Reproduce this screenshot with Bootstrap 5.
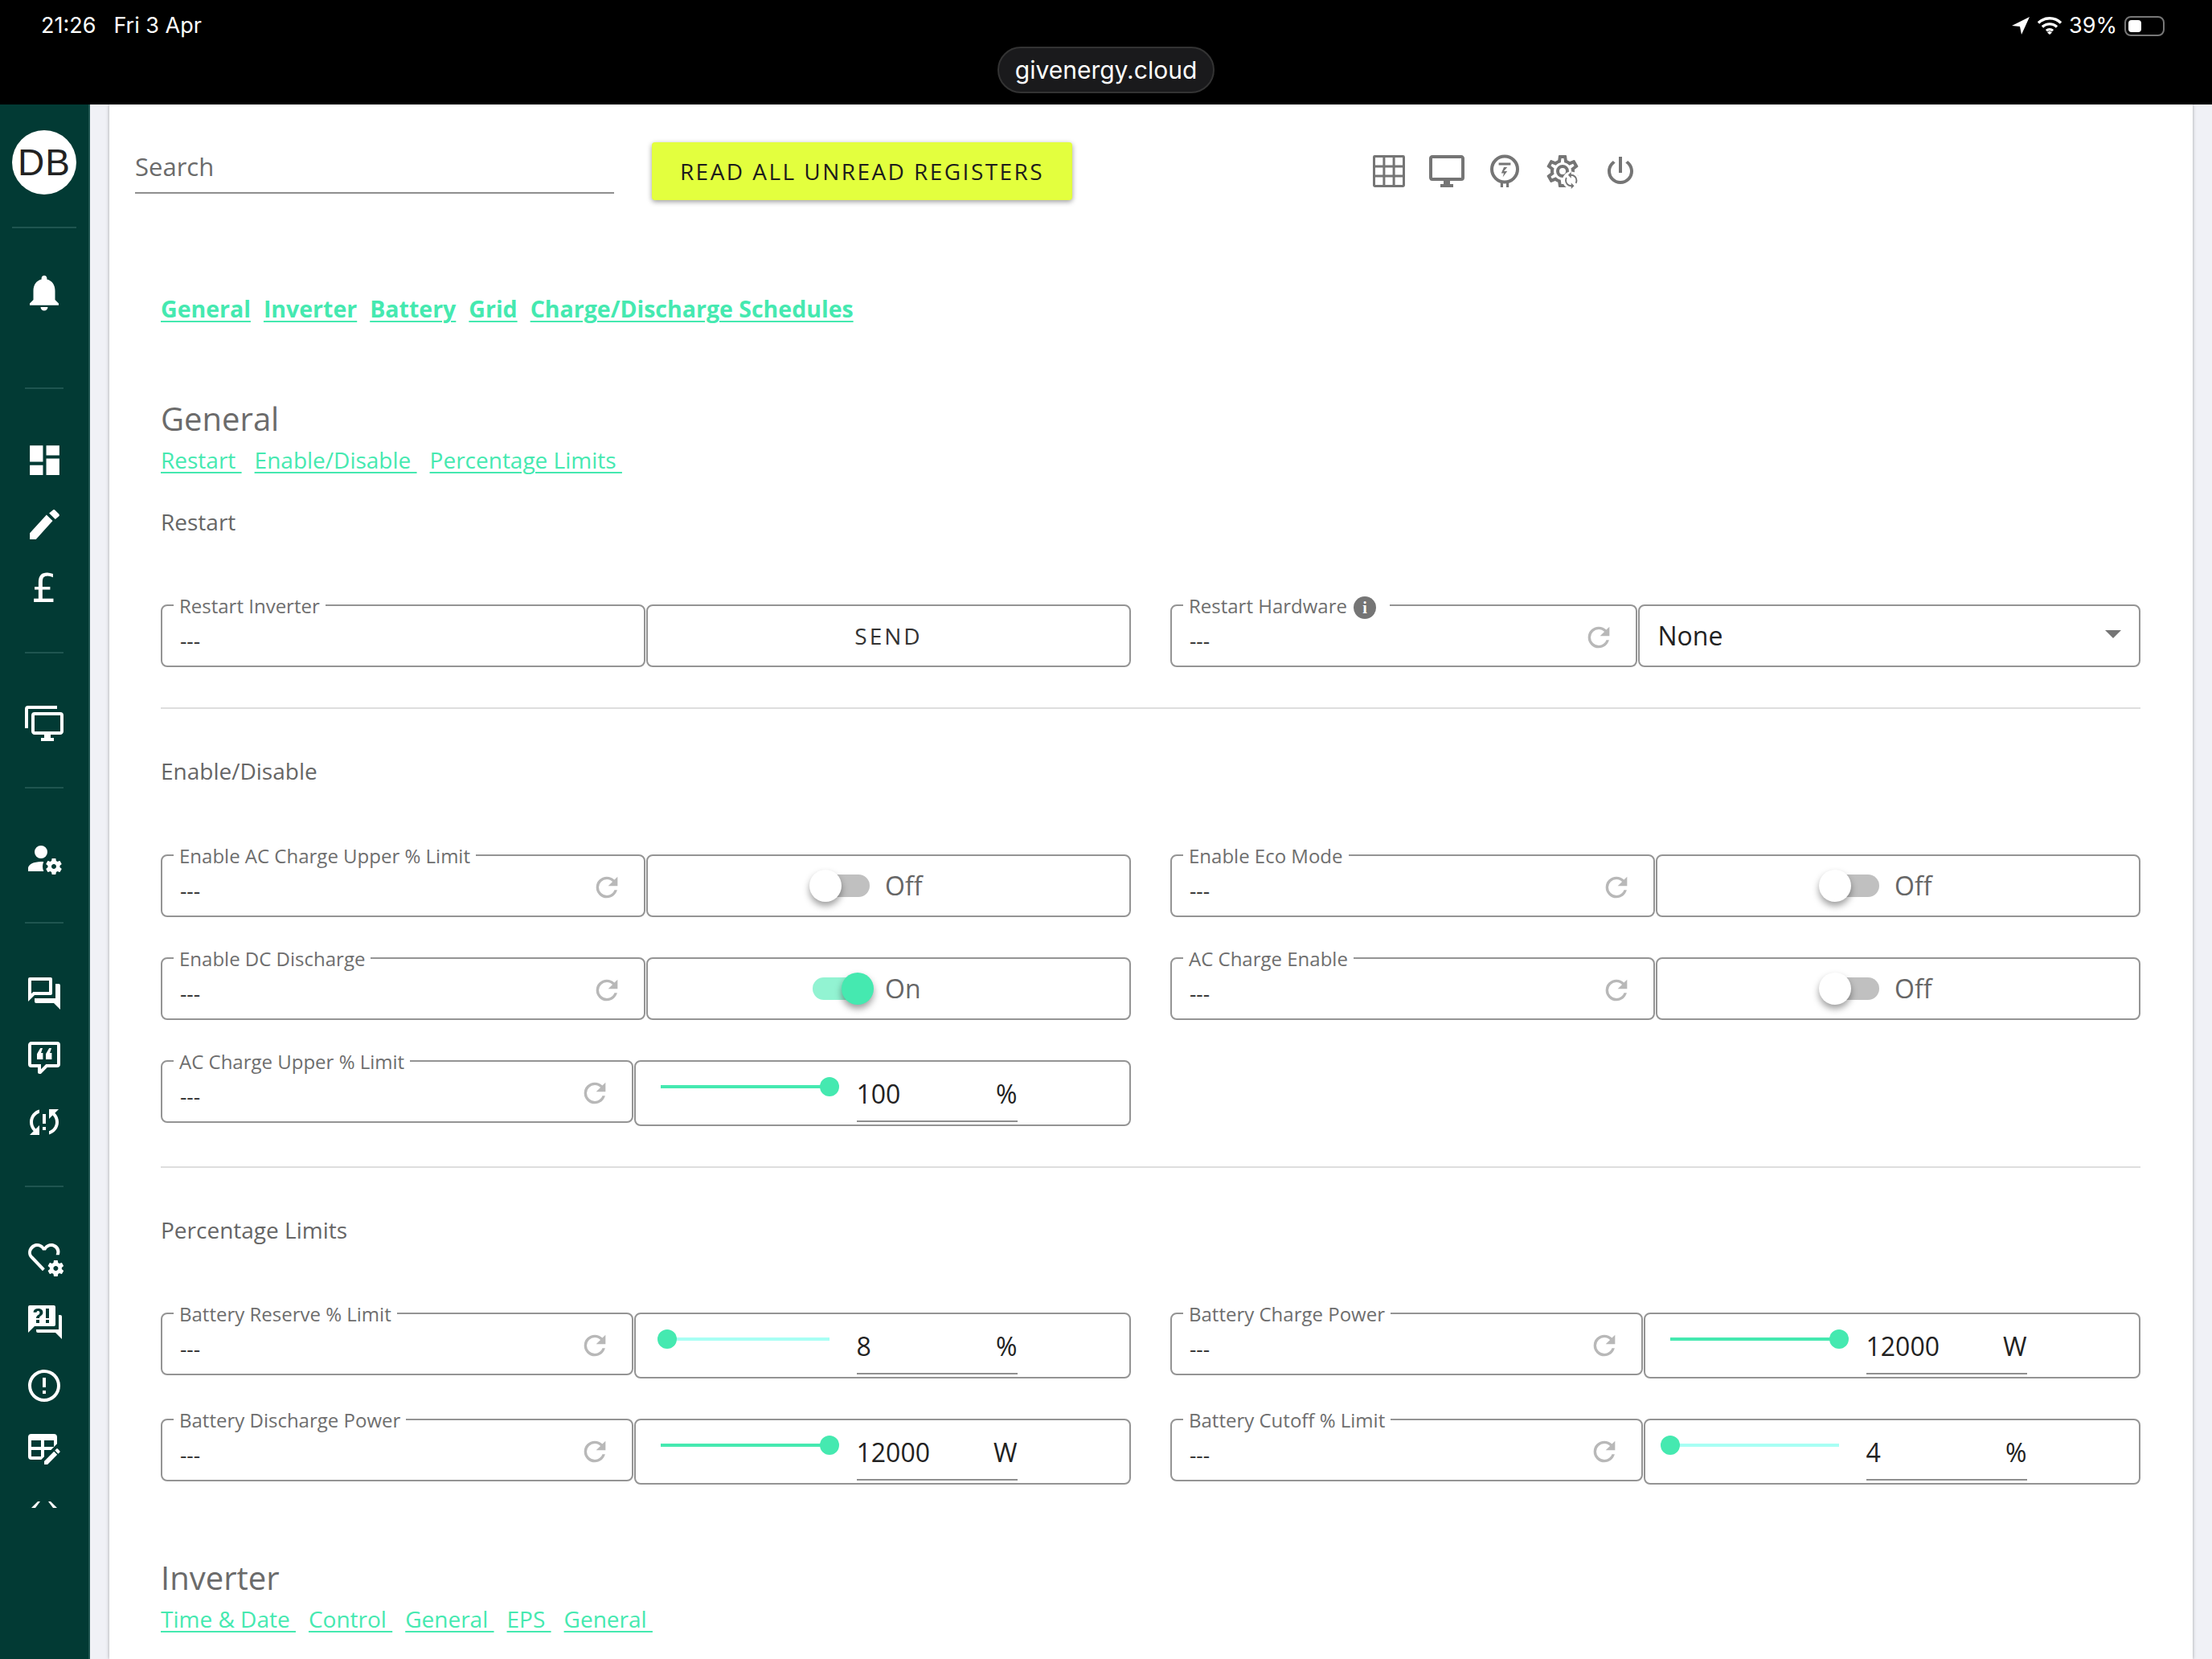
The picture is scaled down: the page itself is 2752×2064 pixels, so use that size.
<!DOCTYPE html>
<html lang="en">
<head>
    <meta charset="UTF-8">
    <meta name="viewport" content="width=device-width, initial-scale=1.0">
    <title>GivEnergy - Remote Control</title>
    <link href="https://cdn.jsdelivr.net/npm/bootstrap@5.3.0/dist/css/bootstrap.min.css" rel="stylesheet">
    <style>
        html, body { height: 100%; }
        body { overflow: hidden; background: #000; font-family: "Open Sans", sans-serif; color: #666; }

        /* ios status bar */
        .status-bar { height: 130px; background: #000; color: #fff; position: relative; font-family: Inter, sans-serif; font-size: 27px; }
        .status-left { padding: 14px 0 0 51px; line-height: 36px; gap: 22px; }
        .status-right { position: absolute; top: 14px; left: 2502px; line-height: 36px; }
        .url-pill { position: absolute; left: 1241px; top: 58px; width: 270px; height: 58px; line-height: 54px; text-align: center; font-size: 30px; border: 2px solid #333; border-radius: 29px; background: #1a1a1c; }
        .batt { width: 50px; height: 25px; border: 2px solid #777; border-radius: 8px; padding: 3px; margin-left: 9px; }
        .batt i { display: block; width: 16px; height: 100%; background: #fff; border-radius: 4px; }

        .app-shell { height: 1934px; overflow: hidden; }

        /* left nav */
        .side-nav { width: 112px; flex: none; background: #023a34; border-right: 2px solid #1f5550; height: 100%; padding-top: 32px; }
        .avatar { width: 80px; height: 80px; border-radius: 50%; background: #fff; color: #222; font: 46px/80px "Liberation Sans", sans-serif; text-align: center; letter-spacing: 1px; }
        .side-rule { width: 48px; height: 2px; background: #1f5550; margin: 39px 0 47px; flex: none; }
        .side-rule.wide { width: 80px; margin: 40px 0; }
        .side-rule.low { margin-top: 78px; margin-bottom: 48px; }
        .side-slot { height: 80px; width: 100%; flex: none; color: #fff; }
        .side-slot svg { fill: #fff; }
        .pound { font: 50px/1 "DejaVu Sans", sans-serif; }

        .gutter-pane { background: #f0f1f6; padding: 0 24px; flex: 1; min-width: 0; height: 100%; }
        .page-pane { background: #fff; height: 100%; padding: 47px 65px 0 64px; box-shadow: 0 0 4px rgba(0, 0, 0, .35); }

        /* toolbar */
        .tool-row { height: 72px; margin-left: -32px; }
        .search-box { width: 596px; height: 64px; border-bottom: 2px solid #8f8f8f; font-size: 31px; line-height: 60px; color: #6b6b6b; flex: none; }
        .btn-read { margin-left: 47px; width: 523px; height: 72px; padding: 0; background: #e3ff3e; border: 0; border-radius: 4px; color: #1c1c1c; font-size: 28px; letter-spacing: 2.45px; box-shadow: 0 2px 6px rgba(0, 0, 0, .4); flex: none; }
        .btn-read:hover { background: #e3ff3e; color: #1c1c1c; }
        .tool-icons { margin-left: 370px; gap: 24px; color: #757575; }
        .tool-icons svg { fill: currentColor; display: block; }

        /* headings and links */
        .jump-main { margin-top: 115px; line-height: 40px; font-size: 28.5px; font-weight: 700; gap: 16px; }
        a.jump { color: #45e9b0; text-decoration-thickness: 2px; text-underline-offset: 4px; }
        .sect-title { font-size: 40px; line-height: 56px; color: #6b6b6b; margin: 89px 0 0; font-weight: 400; }
        .sect-title.next { margin-top: 88px; }
        .jump-sub { margin-top: 3px; line-height: 40px; font-size: 28px; gap: 16px; }
        .jump-sub a { white-space: pre; }
        .group-title { font-size: 28px; line-height: 40px; color: #666; margin: 37px 0 83px; font-weight: 400; }
        .group-title.after-rule { margin-top: 57px; margin-bottom: 84px; }
        .group-title.last { margin-bottom: 83px; }
        hr.sect-rule { margin: 49px 0 0; border: 0; height: 2px; background: #dedede; opacity: 1; }
        hr.sect-rule.tight { margin-top: 50px; }

        /* register rows */
        .reg-row { --bs-gutter-x: 49px; --bs-gutter-y: 0; margin-bottom: 50px; }
        .reg-row:last-of-type { margin-bottom: 0; }
        .reg-cell { flex: 1 1 0; min-width: 0; height: 78px; border: 2px solid #949494; border-radius: 8px; position: relative; background: #fff; }
        .reg-cell.tall { height: 82px; }
        .reg-cell + .reg-cell { margin-left: 1px; }
        .reg-label { position: absolute; left: 14px; top: -15px; padding: 0 7px; background: #fff; font-size: 24px; line-height: 30px; color: #6e6e6e; white-space: nowrap; }
        .info-dot { display: inline-block; width: 28px; height: 28px; border-radius: 50%; background: #757575; color: #fff; font: 700 20px/28px "Liberation Serif", serif; text-align: center; margin: 0 10px 0 4px; vertical-align: 0; }
        .reg-value { position: absolute; left: 22px; top: 25px; line-height: 36px; font-size: 26px; color: #333; }
        .reg-reload { position: absolute; right: 26px; top: 19px; fill: #b8b8b8; display: block; }
        .send-cell { font-size: 28px; letter-spacing: 3px; color: #333; }
        .pick-cell { padding: 0 22px 0 23px; font-size: 32px; color: #222; }
        .pick-caret { width: 0; height: 0; border-left: 10px solid transparent; border-right: 10px solid transparent; border-top: 10px solid #757575; margin: 0 0 4px; }

        /* toggles */
        .switch-wrap { padding-left: 203px; height: 100%; }
        .sw-track { width: 71px; height: 28px; border-radius: 14px; background: #c0c0c0; position: relative; flex: none; margin-left: 2px; }
        .sw-thumb { position: absolute; top: -6px; left: -4px; width: 40px; height: 40px; border-radius: 50%; background: #fff; box-shadow: 0 5px 9px rgba(0, 0, 0, .38); }
        .sw-on .sw-track { background: #92f3d2; }
        .sw-on .sw-thumb { left: 36px; background: #45e9b0; }
        .sw-text { margin-left: 19px; font-size: 32px; color: #666; line-height: 40px; }

        /* sliders */
        .slide-wrap { padding-left: 31px; }
        .slide-rail { position: relative; width: 210px; height: 4px; margin-top: 29px; background: #a8fff4; flex: none; }
        .slide-fill { position: absolute; left: 0; top: 0; height: 100%; background: #45e9b0; }
        .slide-knob { position: absolute; top: -10px; width: 24px; height: 24px; margin-left: -12px; border-radius: 50%; background: #45e9b0; }
        .slide-input { margin: 18px 0 0 34px; width: 200px; height: 57px; line-height: 44px; border-bottom: 2px solid #8f8f8f; font-size: 32px; color: #222; flex: none; }
    </style>
</head>
<body>
    <svg width="0" height="0" class="d-block position-absolute">
        <symbol id="ic-reload" viewBox="0 0 24 24"><path d="M17.65,6.35C16.2,4.9 14.21,4 12,4A8,8 0 0,0 4,12A8,8 0 0,0 12,20C15.73,20 18.84,17.45 19.73,14H17.65C16.83,16.33 14.61,18 12,18A6,6 0 0,1 6,12A6,6 0 0,1 12,6C13.66,6 15.14,6.69 16.22,7.78L13,11H20V4L17.65,6.35Z"/></symbol>
    </svg>

    <div class="status-bar">
        <div class="status-left d-flex"><span>21:26</span><span>Fri 3 Apr</span></div>
        <div class="status-right d-flex align-items-center">
            <svg width="24" height="24" viewBox="0 0 24 24" fill="#fff"><path d="M23 1 L1 12 L11 13 L13 23 Z"/></svg>
            <svg class="ms-2" width="32" height="24" viewBox="0 0 32 24" fill="none" stroke="#fff" stroke-width="3.4"><path d="M2 8.5a20 20 0 0 1 28 0"/><path d="M7 13.5a13 13 0 0 1 18 0"/><path d="M12 18.3a6 6 0 0 1 8 0"/><path d="M13 20.5 L16 23 L19 20.5 L16 18.5Z" fill="#fff" stroke="none"/></svg>
            <span class="ms-2">39%</span>
            <div class="batt"><i></i></div>
        </div>
        <div class="url-pill">givenergy.cloud</div>
    </div>

    <div class="app-shell d-flex">
        <nav class="side-nav d-flex flex-column align-items-center">
            <div class="avatar flex-none">DB</div>
            <div class="side-rule wide"></div>
            <div class="side-slot d-flex align-items-center justify-content-center">
                <svg width="54" height="54" viewBox="0 0 24 24"><path d="M12 22c1.1 0 2-.9 2-2h-4c0 1.1.89 2 2 2zm6-6v-5c0-3.07-1.64-5.64-4.5-6.32V4c0-.83-.67-1.5-1.5-1.5s-1.5.67-1.5 1.5v.68C7.63 5.36 6 7.92 6 11v5l-2 2v1h16v-1l-2-2z"/></svg>
            </div>
            <div class="side-rule low"></div>
            <div class="side-slot d-flex align-items-center justify-content-center">
                <svg width="49" height="49" viewBox="0 0 24 24"><path d="M3 13h8V3H3v10zm0 8h8v-6H3v6zm10 0h8V11h-8v10zm0-18v6h8V3h-8z"/></svg>
            </div>
            <div class="side-slot d-flex align-items-center justify-content-center">
                <svg width="49" height="49" viewBox="0 0 24 24"><path d="M3 17.25V21h3.75L16.9 9.85l-3.75-3.75L3 17.25zM20.71 7.04c.39-.39.39-1.02 0-1.41l-2.34-2.34c-.39-.39-1.02-.39-1.41 0l-2.2 1.83 3.75 3.75 2.2-1.83z"/></svg>
            </div>
            <div class="side-slot pound d-flex align-items-center justify-content-center">£</div>
            <div class="side-rule"></div>
            <div class="side-slot d-flex align-items-center justify-content-center">
                <svg width="48" height="48" viewBox="0 0 24 24"><path d="M22,17V7H6V17H22M22,5A2,2 0 0,1 24,7V17C24,18.11 23.1,19 22,19H16V21H18V23H10V21H12V19H6C4.89,19 4,18.1 4,17V7A2,2 0 0,1 6,5H22M2,3V15H0V3A2,2 0 0,1 2,1H20V3H2Z"/></svg>
            </div>
            <div class="side-rule"></div>
            <div class="side-slot d-flex align-items-center justify-content-center">
                <svg width="48" height="48" viewBox="0 0 24 24" fill-rule="evenodd"><path d="M10 4A4 4 0 0 0 6 8A4 4 0 0 0 10 12A4 4 0 0 0 14 8A4 4 0 0 0 10 4M17 12C16.87 12 16.76 12.09 16.74 12.21L16.55 13.53C16.25 13.66 15.96 13.82 15.7 14L14.46 13.5C14.35 13.5 14.22 13.5 14.15 13.63L13.15 15.36C13.09 15.47 13.11 15.6 13.21 15.68L14.27 16.5C14.25 16.67 14.24 16.83 14.24 17C14.24 17.17 14.25 17.33 14.27 17.5L13.21 18.32C13.12 18.4 13.09 18.53 13.15 18.64L14.15 20.37C14.21 20.5 14.34 20.5 14.46 20.5L15.7 20C15.96 20.18 16.24 20.35 16.55 20.47L16.74 21.79C16.76 21.91 16.86 22 17 22H19C19.11 22 19.22 21.91 19.24 21.79L19.43 20.47C19.73 20.34 20 20.18 20.27 20L21.5 20.5C21.63 20.5 21.76 20.5 21.83 20.37L22.83 18.64C22.89 18.53 22.86 18.4 22.77 18.32L21.7 17.5C21.72 17.33 21.74 17.17 21.74 17C21.74 16.83 21.73 16.67 21.7 16.5L22.76 15.68C22.85 15.6 22.88 15.47 22.82 15.36L21.82 13.63C21.76 13.5 21.63 13.5 21.5 13.5L20.27 14C20 13.82 19.73 13.65 19.42 13.53L19.23 12.21C19.22 12.09 19.11 12 19 12H17M10 14C5.58 14 2 15.79 2 18V20H11.68A7 7 0 0 1 11 17A7 7 0 0 1 11.64 14.09C11.11 14.03 10.56 14 10 14M18 15.5C18.83 15.5 19.5 16.17 19.5 17C19.5 17.83 18.83 18.5 18 18.5C17.16 18.5 16.5 17.83 16.5 17C16.5 16.17 17.17 15.5 18 15.5Z"/></svg>
            </div>
            <div class="side-rule"></div>
            <div class="side-slot d-flex align-items-center justify-content-center">
                <svg width="48" height="48" viewBox="0 0 24 24"><path d="M15,4V11H5.17L4,12.17V4H15M16,2H3A1,1 0 0,0 2,3V17L6,13H16A1,1 0 0,0 17,12V3A1,1 0 0,0 16,2M21,6H19V15H6V17A1,1 0 0,0 7,18H18L22,22V7A1,1 0 0,0 21,6Z"/></svg>
            </div>
            <div class="side-slot d-flex align-items-center justify-content-center">
                <svg width="48" height="48" viewBox="0 0 24 24"><path d="M9,22A1,1 0 0,1 8,21V18H4A2,2 0 0,1 2,16V4C2,2.89 2.9,2 4,2H20A2,2 0 0,1 22,4V16A2,2 0 0,1 20,18H13.9L10.2,21.71C10,21.9 9.75,22 9.5,22H9M10,16V19.08L13.08,16H20V4H4V16H10Z"/><path d="M7.5 13V9.6L9.6 6H11L10 9H11.2V13ZM13 13V9.6L15.1 6H16.5L15.5 9H16.7V13Z"/></svg>
            </div>
            <div class="side-slot d-flex align-items-center justify-content-center">
                <svg width="48" height="48" viewBox="0 0 24 24"><path d="M11 13H13V7H11M21 4H15V10L17.24 7.76C18.32 8.85 19 10.34 19 12C19 14.61 17.33 16.83 15 17.65V19.74C18.45 18.85 21 15.73 21 12C21 9.79 20.09 7.8 18.64 6.36M11 17H13V15H11M3 12C3 14.21 3.91 16.2 5.36 17.64L3 20H9V14L6.76 16.24C5.68 15.15 5 13.66 5 12C5 9.39 6.67 7.17 9 6.35V4.26C5.55 5.15 3 8.27 3 12Z"/></svg>
            </div>
            <div class="side-rule"></div>
            <div class="side-slot d-flex align-items-center justify-content-center">
                <svg width="48" height="48" viewBox="0 0 24 24" fill-rule="evenodd"><path d="M11 20.6L3.6 12.9C1.2 10.4 1.7 6.6 4.4 4.5C7 2.7 10.3 3.4 12 5.7C13.7 3.4 17 2.7 19.6 4.5C21.6 6 22.2 8.4 21.4 10.6H19.3C20.1 8.9 19.6 7.1 18.3 6.2C16.4 4.9 14 5.6 13 7.8H11C10 5.6 7.6 4.9 5.7 6.2C3.6 7.7 3.3 10 5.1 11.5L12.4 19.1Z"/><path transform="translate(1.2 2)" d="M17 12C16.87 12 16.76 12.09 16.74 12.21L16.55 13.53C16.25 13.66 15.96 13.82 15.7 14L14.46 13.5C14.35 13.5 14.22 13.5 14.15 13.63L13.15 15.36C13.09 15.47 13.11 15.6 13.21 15.68L14.27 16.5C14.25 16.67 14.24 16.83 14.24 17C14.24 17.17 14.25 17.33 14.27 17.5L13.21 18.32C13.12 18.4 13.09 18.53 13.15 18.64L14.15 20.37C14.21 20.5 14.34 20.5 14.46 20.5L15.7 20C15.96 20.18 16.24 20.35 16.55 20.47L16.74 21.79C16.76 21.91 16.86 22 17 22H19C19.11 22 19.22 21.91 19.24 21.79L19.43 20.47C19.73 20.34 20 20.18 20.27 20L21.5 20.5C21.63 20.5 21.76 20.5 21.83 20.37L22.83 18.64C22.89 18.53 22.86 18.4 22.77 18.32L21.7 17.5C21.72 17.33 21.74 17.17 21.74 17C21.74 16.83 21.73 16.67 21.7 16.5L22.76 15.68C22.85 15.6 22.88 15.47 22.82 15.36L21.82 13.63C21.76 13.5 21.63 13.5 21.5 13.5L20.27 14C20 13.82 19.73 13.65 19.42 13.53L19.23 12.21C19.22 12.09 19.11 12 19 12H17M18 15.5C18.83 15.5 19.5 16.17 19.5 17C19.5 17.83 18.83 18.5 18 18.5C17.16 18.5 16.5 17.83 16.5 17C16.5 16.17 17.17 15.5 18 15.5Z"/></svg>
            </div>
            <div class="side-slot d-flex align-items-center justify-content-center">
                <svg width="48" height="48" viewBox="0 0 24 24" fill-rule="evenodd"><path d="M18,15H6L2,19V3A1,1 0 0,1 3,2H18A1,1 0 0,1 19,3V14A1,1 0 0,1 18,15M23,9V23L19,19H8A1,1 0 0,1 7,18V17H21V8H22A1,1 0 0,1 23,9M8.19,4C7.32,4 6.62,4.2 6.08,4.59C5.56,5 5.3,5.57 5.31,6.36L5.32,6.39H7.25C7.26,6.09 7.35,5.86 7.53,5.7C7.71,5.55 7.93,5.47 8.19,5.47C8.5,5.47 8.76,5.57 8.94,5.75C9.12,5.94 9.2,6.2 9.2,6.5C9.2,6.82 9.13,7.09 8.97,7.32C8.83,7.55 8.62,7.75 8.36,7.91C7.85,8.25 7.5,8.55 7.31,8.82C7.11,9.08 7,9.5 7,10H9C9,9.69 9.04,9.44 9.13,9.26C9.22,9.08 9.39,8.9 9.64,8.74C10.09,8.5 10.46,8.21 10.75,7.81C11.04,7.41 11.19,7 11.19,6.5C11.19,5.74 10.92,5.13 10.38,4.68C9.85,4.23 9.12,4 8.19,4M7,11V13H9V11H7M13,11V13H15V11H13M13,4V10H15V4H13Z"/></svg>
            </div>
            <div class="side-slot d-flex align-items-center justify-content-center">
                <svg width="48" height="48" viewBox="0 0 24 24"><path d="M11,15H13V17H11V15M11,7H13V13H11V7M12,2C6.47,2 2,6.5 2,12A10,10 0 0,0 12,22A10,10 0 0,0 22,12A10,10 0 0,0 12,2M12,20A8,8 0 0,1 4,12A8,8 0 0,1 12,4A8,8 0 0,1 20,12A8,8 0 0,1 12,20Z"/></svg>
            </div>
            <div class="side-slot d-flex align-items-center justify-content-center">
                <svg width="48" height="48" viewBox="0 0 24 24"><path d="M21.7,13.35L20.7,14.35L18.65,12.3L19.65,11.3C19.86,11.09 20.21,11.09 20.42,11.3L21.7,12.58C21.91,12.79 21.91,13.14 21.7,13.35M12,18.94L18.07,12.88L20.12,14.93L14.06,21H12V18.94M4,2H18A2,2 0 0,1 20,4V8.17L16.17,12H12V16.17L10.17,18H4A2,2 0 0,1 2,16V4A2,2 0 0,1 4,2M4,6V10H10V6H4M12,6V10H18V6H12M4,12V16H10V12H4Z"/></svg>
            </div>
            <svg class="mt-4 flex-none" width="48" height="8" viewBox="0 0 48 8" fill="#fff"><path d="M8 8L16 0H19L13 8ZM29 0H32L40 8H35Z"/></svg>
        </nav>

        <div class="gutter-pane">
            <main class="page-pane">
                <div class="tool-row d-flex align-items-center">
                    <div class="search-box align-self-start">Search</div>
                    <button class="btn btn-read" type="button">READ ALL UNREAD REGISTERS</button>
                    <div class="tool-icons d-flex">
                        <svg width="48" height="48" viewBox="0 0 24 24"><path fill-rule="evenodd" d="M3.2 2H20.8A1.2 1.2 0 0 1 22 3.2V20.8A1.2 1.2 0 0 1 20.8 22H3.2A1.2 1.2 0 0 1 2 20.800V3.2A1.200 1.200 0 0 1 3.200 2ZM3.500 3.500V8.200H8.200V3.500ZM9.700 3.500V8.200H14.300V3.500ZM15.800 3.500V8.200H20.500V3.500ZM3.500 9.700V14.300H8.200V9.700ZM9.700 9.700V14.300H14.300V9.700ZM15.800 9.700V14.300H20.500V9.700ZM3.500 15.800V20.500H8.200V15.800ZM9.700 15.800V20.500H14.300V15.800ZM15.800 15.800V20.500H20.500V15.800Z"/></svg>
                        <svg width="48" height="48" viewBox="0 0 24 24"><path d="M21,16H3V4H21M21,2H3C1.89,2 1,2.89 1,4V16A2,2 0 0,0 3,18H10V20H8V22H16V20H14V18H21A2,2 0 0,0 23,16V4C23,2.89 22.1,2 21,2Z"/></svg>
                        <svg width="48" height="48" viewBox="0 0 24 24"><circle cx="12" cy="10.800" r="8" fill="none" stroke="currentColor" stroke-width="2"/><path d="M8.300 6.800H15.700V8.200H8.300ZM13.600 9.500L11.500 12H13.600L10.800 15.800L11.500 13.300H9.900L11.500 9.500ZM9.400 18.800H11V22H9.400ZM13 18.800H14.600V22H13Z"/></svg>
                        <svg width="48" height="48" viewBox="0 0 24 24"><path fill-rule="evenodd" d="M12,8A4,4 0 0,1 16,12A4,4 0 0,1 12,16A4,4 0 0,1 8,12A4,4 0 0,1 12,8M12,10A2,2 0 0,0 10,12A2,2 0 0,0 12,14A2,2 0 0,0 14,12A2,2 0 0,0 12,10M10,22C9.750,22 9.540,21.820 9.500,21.580L9.130,18.930C8.500,18.680 7.960,18.340 7.440,17.940L4.950,18.950C4.730,19.030 4.460,18.950 4.340,18.730L2.340,15.270C2.210,15.050 2.270,14.780 2.460,14.630L4.570,12.970L4.500,12L4.570,11L2.460,9.370C2.270,9.220 2.210,8.950 2.340,8.730L4.340,5.270C4.460,5.050 4.730,4.960 4.950,5.050L7.440,6.050C7.960,5.660 8.500,5.320 9.130,5.070L9.500,2.420C9.540,2.180 9.750,2 10,2H14C14.250,2 14.460,2.180 14.500,2.420L14.870,5.070C15.500,5.320 16.040,5.660 16.560,6.050L19.050,5.050C19.270,4.960 19.540,5.050 19.660,5.270L21.660,8.730C21.790,8.950 21.730,9.220 21.540,9.370L19.430,11L19.500,12L19.430,13L21.540,14.630C21.730,14.780 21.790,15.050 21.660,15.270L19.660,18.730C19.540,18.950 19.270,19.040 19.050,18.950L16.560,17.950C16.040,18.340 15.500,18.680 14.870,18.930L14.500,21.580C14.460,21.820 14.250,22 14,22H10M11.250,4L10.880,6.610C9.680,6.860 8.620,7.500 7.850,8.390L5.440,7.350L4.690,8.650L6.800,10.200C6.400,11.370 6.400,12.640 6.800,13.800L4.680,15.360L5.430,16.660L7.860,15.620C8.630,16.500 9.680,17.140 10.870,17.380L11.240,20H12.760L13.130,17.390C14.320,17.140 15.370,16.500 16.140,15.620L18.570,16.660L19.320,15.360L17.200,13.810C17.600,12.640 17.600,11.370 17.200,10.200L19.310,8.650L18.560,7.350L16.150,8.390C15.380,7.500 14.320,6.860 13.120,6.620L12.750,4H11.250Z"/><circle cx="17.300" cy="17.600" r="5.300" fill="#fff"/><path transform="translate(11.600 12) scale(.48)" d="M12,18A6,6 0 0,1 6,12C6,11 6.250,10.030 6.700,9.200L5.240,7.740C4.460,8.970 4,10.430 4,12A8,8 0 0,0 12,20V23L16,19L12,15M12,4V1L8,5L12,9V6A6,6 0 0,1 18,12C18,13 17.750,13.970 17.300,14.800L18.760,16.260C19.540,15.030 20,13.570 20,12A8,8 0 0,0 12,4Z"/></svg>
                        <svg width="48" height="48" viewBox="0 0 24 24"><path d="M16.560,5.440L15.110,6.890C16.840,7.940 18,9.830 18,12A6,6 0 0,1 12,18A6,6 0 0,1 6,12C6,9.830 7.160,7.940 8.880,6.880L7.440,5.440C5.360,6.880 4,9.280 4,12A8,8 0 0,0 12,20A8,8 0 0,0 20,12C20,9.280 18.640,6.880 16.560,5.440M13,3H11V13H13"/></svg>
                    </div>
                </div>

                <div class="jump-main d-flex">
                    <a class="jump" href="#">General</a>
                    <a class="jump" href="#">Inverter</a>
                    <a class="jump" href="#">Battery</a>
                    <a class="jump" href="#">Grid</a>
                    <a class="jump" href="#">Charge/Discharge Schedules</a>
                </div>

                <h4 class="sect-title">General</h4>
                <div class="jump-sub d-flex">
                    <a class="jump" href="#">Restart </a>
                    <a class="jump" href="#">Enable/Disable </a>
                    <a class="jump" href="#">Percentage Limits </a>
                </div>

                <h5 class="group-title">Restart</h5>
                <div class="row reg-row">
                    <div class="col-6 d-flex align-items-start">
                        <div class="reg-cell"><span class="reg-label">Restart Inverter</span><span class="reg-value">---</span></div>
                        <div class="reg-cell send-cell d-flex align-items-center justify-content-center">SEND</div>
                    </div>
                    <div class="col-6 d-flex align-items-start">
                        <div class="reg-cell"><span class="reg-label">Restart Hardware<span class="info-dot ms-2">i</span></span><span class="reg-value">---</span><svg class="reg-reload" width="40" height="40"><use href="#ic-reload"/></svg></div>
                        <div class="reg-cell pick-cell d-flex align-items-center justify-content-between"><span>None</span><span class="pick-caret"></span></div>
                    </div>
                </div>
                <hr class="sect-rule">

                <h5 class="group-title after-rule">Enable/Disable</h5>
                <div class="row reg-row">
                    <div class="col-6 d-flex align-items-start">
                        <div class="reg-cell"><span class="reg-label">Enable AC Charge Upper % Limit</span><span class="reg-value">---</span><svg class="reg-reload" width="40" height="40"><use href="#ic-reload"/></svg></div>
                        <div class="reg-cell"><div class="switch-wrap d-flex align-items-center"><span class="sw-track"><span class="sw-thumb"></span></span><span class="sw-text">Off</span></div></div>
                    </div>
                    <div class="col-6 d-flex align-items-start">
                        <div class="reg-cell"><span class="reg-label">Enable Eco Mode</span><span class="reg-value">---</span><svg class="reg-reload" width="40" height="40"><use href="#ic-reload"/></svg></div>
                        <div class="reg-cell"><div class="switch-wrap d-flex align-items-center"><span class="sw-track"><span class="sw-thumb"></span></span><span class="sw-text">Off</span></div></div>
                    </div>
                </div>
                <div class="row reg-row">
                    <div class="col-6 d-flex align-items-start">
                        <div class="reg-cell"><span class="reg-label">Enable DC Discharge</span><span class="reg-value">---</span><svg class="reg-reload" width="40" height="40"><use href="#ic-reload"/></svg></div>
                        <div class="reg-cell sw-on"><div class="switch-wrap d-flex align-items-center"><span class="sw-track"><span class="sw-thumb"></span></span><span class="sw-text">On</span></div></div>
                    </div>
                    <div class="col-6 d-flex align-items-start">
                        <div class="reg-cell"><span class="reg-label">AC Charge Enable</span><span class="reg-value">---</span><svg class="reg-reload" width="40" height="40"><use href="#ic-reload"/></svg></div>
                        <div class="reg-cell"><div class="switch-wrap d-flex align-items-center"><span class="sw-track"><span class="sw-thumb"></span></span><span class="sw-text">Off</span></div></div>
                    </div>
                </div>
                <div class="row reg-row">
                    <div class="col-6 d-flex align-items-start">
                        <div class="reg-cell"><span class="reg-label">AC Charge Upper % Limit</span><span class="reg-value">---</span><svg class="reg-reload" width="40" height="40"><use href="#ic-reload"/></svg></div>
                        <div class="reg-cell tall slide-wrap d-flex align-items-start">
                            <div class="slide-rail"><span class="slide-fill" style="width:100%"></span><span class="slide-knob" style="left:100%"></span></div>
                            <div class="slide-input d-flex justify-content-between"><span>100</span><span>%</span></div>
                        </div>
                    </div>
                </div>
                <hr class="sect-rule tight">

                <h5 class="group-title after-rule last">Percentage Limits</h5>
                <div class="row reg-row">
                    <div class="col-6 d-flex align-items-start">
                        <div class="reg-cell"><span class="reg-label">Battery Reserve % Limit</span><span class="reg-value">---</span><svg class="reg-reload" width="40" height="40"><use href="#ic-reload"/></svg></div>
                        <div class="reg-cell tall slide-wrap d-flex align-items-start">
                            <div class="slide-rail"><span class="slide-fill" style="width:4.2%"></span><span class="slide-knob" style="left:4.2%"></span></div>
                            <div class="slide-input d-flex justify-content-between"><span>8</span><span>%</span></div>
                        </div>
                    </div>
                    <div class="col-6 d-flex align-items-start">
                        <div class="reg-cell"><span class="reg-label">Battery Charge Power</span><span class="reg-value">---</span><svg class="reg-reload" width="40" height="40"><use href="#ic-reload"/></svg></div>
                        <div class="reg-cell tall slide-wrap d-flex align-items-start">
                            <div class="slide-rail"><span class="slide-fill" style="width:100%"></span><span class="slide-knob" style="left:100%"></span></div>
                            <div class="slide-input d-flex justify-content-between"><span>12000</span><span>W</span></div>
                        </div>
                    </div>
                </div>
                <div class="row reg-row">
                    <div class="col-6 d-flex align-items-start">
                        <div class="reg-cell"><span class="reg-label">Battery Discharge Power</span><span class="reg-value">---</span><svg class="reg-reload" width="40" height="40"><use href="#ic-reload"/></svg></div>
                        <div class="reg-cell tall slide-wrap d-flex align-items-start">
                            <div class="slide-rail"><span class="slide-fill" style="width:100%"></span><span class="slide-knob" style="left:100%"></span></div>
                            <div class="slide-input d-flex justify-content-between"><span>12000</span><span>W</span></div>
                        </div>
                    </div>
                    <div class="col-6 d-flex align-items-start">
                        <div class="reg-cell"><span class="reg-label">Battery Cutoff % Limit</span><span class="reg-value">---</span><svg class="reg-reload" width="40" height="40"><use href="#ic-reload"/></svg></div>
                        <div class="reg-cell tall slide-wrap d-flex align-items-start">
                            <div class="slide-rail"><span class="slide-fill" style="width:0%"></span><span class="slide-knob" style="left:0%"></span></div>
                            <div class="slide-input d-flex justify-content-between"><span>4</span><span>%</span></div>
                        </div>
                    </div>
                </div>

                <h4 class="sect-title next">Inverter</h4>
                <div class="jump-sub d-flex">
                    <a class="jump" href="#">Time &amp; Date </a>
                    <a class="jump" href="#">Control </a>
                    <a class="jump" href="#">General </a>
                    <a class="jump" href="#">EPS </a>
                    <a class="jump" href="#">General </a>
                </div>
            </main>
        </div>
    </div>
    <script src="https://cdn.jsdelivr.net/npm/bootstrap@5.3.0/dist/js/bootstrap.bundle.min.js"></script>
</body>
</html>
